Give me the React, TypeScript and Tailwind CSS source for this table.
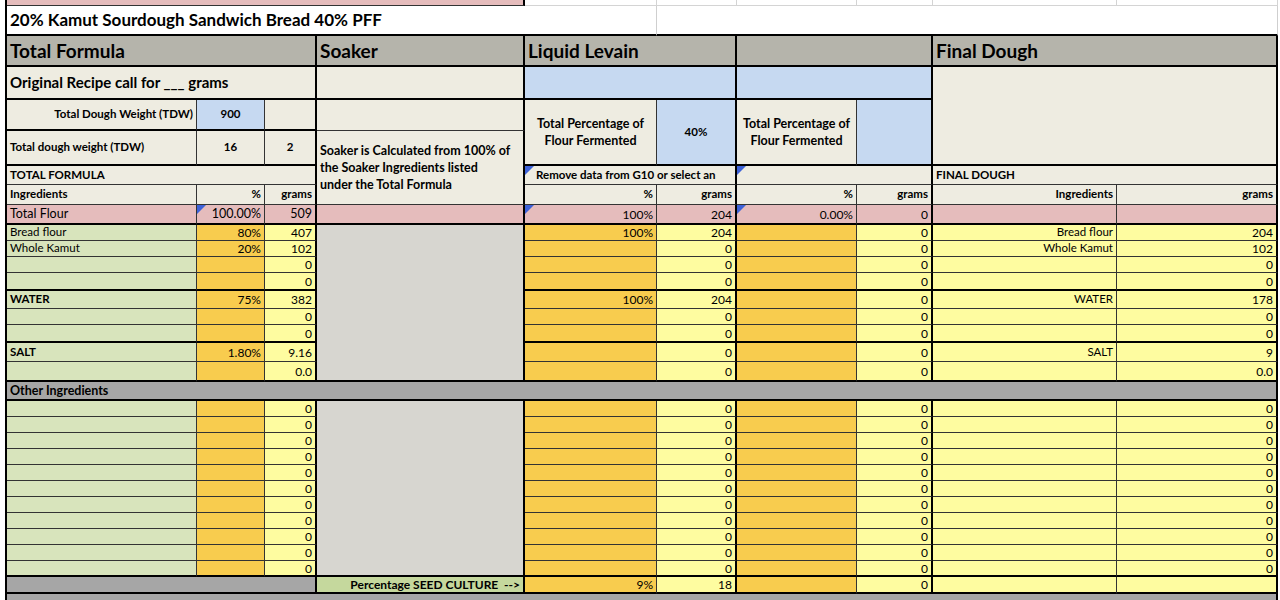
import { ReactNode } from 'react';
import clsx from 'clsx';

// spreadsheet palette
const WHITE = 'bg-white';
const PINK = 'bg-[#e5bcbc]';
const HEAD = 'bg-[#b5b4ab]';
const BEIGE = 'bg-[#eeece1]';
const BLUE = 'bg-[#c6d9f1]';
const GREEN = 'bg-[#d8e4bc]';
const ORANGE = 'bg-[#f8cc4e]';
const YEL = 'bg-[#fefca0]';
const GRAY = 'bg-[#d7d6d0]';
const DARK = 'bg-[#a6a6a6]';
const SEED = 'bg-[#c5d89d]';

const thickCols = [2, 3, 5, 7, 9];

const spanCls: Record<number, string> = {
  1: 'col-span-1',
  2: 'col-span-2',
  3: 'col-span-3',
  4: 'col-span-4',
  5: 'col-span-5',
  10: 'col-span-10',
};

const rowCls: Record<number, string> = {
  1: '',
  2: 'row-span-2',
  3: 'row-span-3',
  9: 'row-span-9',
  11: 'row-span-11',
};

type CellProps = {
  col: number;
  span?: number;
  rows?: number;
  bg: string;
  children?: ReactNode;
  align?: 'left' | 'right' | 'center';
  bold?: boolean;
  tb?: boolean;
  light?: boolean;
  mark?: boolean;
  wrap?: boolean;
  size?: string;
};

function Mark() {
  return (
    <svg className="absolute left-0 top-0" width="9" height="9" viewBox="0 0 9 9">
      <polygon points="0,0 9,0 0,9" fill="#3d62d8" />
    </svg>
  );
}

function C({
  col,
  span = 1,
  rows = 1,
  bg,
  children,
  align = 'left',
  bold,
  tb,
  light,
  mark,
  wrap,
  size = 'text-[12px]',
}: CellProps) {
  const last = col + span - 1;
  const thickR = thickCols.includes(last);
  return (
    <div
      className={clsx(
        'relative flex items-center overflow-hidden px-[3px] text-black',
        wrap ? 'whitespace-normal leading-[17px]' : 'whitespace-nowrap leading-tight',
        spanCls[span],
        rowCls[rows],
        bg,
        size,
        bold && 'font-bold',
        align === 'right' && 'justify-end text-right',
        align === 'center' && 'justify-center text-center',
        light
          ? 'border-r border-b border-[#d4d4d4]'
          : clsx(
              thickR ? 'border-r-2 border-r-black' : 'border-r border-r-[#333]',
              tb ? 'border-b-2 border-b-black' : 'border-b border-b-[#333]'
            )
      )}
    >
      {mark && <Mark />}
      {children}
    </div>
  );
}

type Row = {
  a?: string;
  b?: string;
  c?: string;
  e?: string;
  f?: string;
  h?: string;
  i?: string;
  j?: string;
  strong?: boolean;
};

const z: Row = { c: '0', f: '0', h: '0', j: '0' };

const flour: Row[] = [
  { a: 'Bread flour', b: '80%', c: '407', e: '100%', f: '204', h: '0', i: 'Bread flour', j: '204' },
  { a: 'Whole Kamut', b: '20%', c: '102', f: '0', h: '0', i: 'Whole Kamut', j: '102' },
  z,
  z,
];
const water: Row[] = [
  { a: 'WATER', strong: true, b: '75%', c: '382', e: '100%', f: '204', h: '0', i: 'WATER', j: '178' },
  z,
  z,
];
const salt: Row[] = [
  { a: 'SALT', strong: true, b: '1.80%', c: '9.16', f: '0', h: '0', i: 'SALT', j: '9' },
  { c: '0.0', f: '0', h: '0', j: '0.0' },
];
const other: Row[] = Array.from({ length: 11 }, () => z);

function DataRow({ r, tb, soaker }: { r: Row; tb?: boolean; soaker?: number }) {
  return (
    <>
      <C col={0} bg={GREEN} bold={r.strong} tb={tb} size="text-[11.5px]">
        {r.a}
      </C>
      <C col={1} bg={ORANGE} align="right" tb={tb}>
        {r.b}
      </C>
      <C col={2} bg={YEL} align="right" tb={tb}>
        {r.c}
      </C>
      {soaker && <C col={3} rows={soaker} bg={GRAY} tb />}
      <C col={4} bg={ORANGE} align="right" tb={tb}>
        {r.e}
      </C>
      <C col={5} bg={YEL} align="right" tb={tb}>
        {r.f}
      </C>
      <C col={6} bg={ORANGE} tb={tb} />
      <C col={7} bg={YEL} align="right" tb={tb}>
        {r.h}
      </C>
      <C col={8} bg={YEL} align="right" tb={tb} size="text-[11.5px]">
        {r.i}
      </C>
      <C col={9} bg={YEL} align="right" tb={tb}>
        {r.j}
      </C>
    </>
  );
}

function Section({ rows, soaker }: { rows: Row[]; soaker?: number }) {
  return (
    <>
      {rows.map((r, idx) => (
        <DataRow
          key={idx}
          r={r}
          tb={idx === rows.length - 1}
          soaker={idx === 0 ? soaker : undefined}
        />
      ))}
    </>
  );
}

export default function App() {
  return (
    <div className="min-h-screen overflow-hidden bg-white font-[Lato,sans-serif]">
      <div className="ml-[5px] grid w-max grid-cols-[190px_68px_52px_208px_132px_80px_120px_76px_184px_161px] grid-rows-[6px_30px_31px_33px_31px_35px_19px_20px_20px_16px_16px_16px_18px_18px_16px_18px_19px_20px_19px_repeat(11,16px)_17px_22px] border-l-2 border-black">
        {/* cut-off row on top */}
        <C col={0} span={4} bg={PINK} />
        <C col={4} bg={WHITE} light />
        <C col={5} bg={WHITE} light />
        <C col={6} bg={WHITE} light />
        <C col={7} bg={WHITE} light />
        <C col={8} bg={WHITE} light />
        <C col={9} bg={WHITE} light />

        {/* title */}
        <div className="col-span-5 flex items-center border-r border-b-2 border-r-[#cfcfcf] border-b-black bg-white px-[3px] text-[17px] font-bold text-black">
          20% Kamut Sourdough Sandwich Bread 40% PFF
        </div>
        <div className="col-span-5 border-r border-b-2 border-r-[#cfcfcf] border-b-black bg-white" />

        {/* section headers */}
        <C col={0} span={3} bg={HEAD} bold tb size="text-[19px]">
          Total Formula
        </C>
        <C col={3} bg={HEAD} bold tb size="text-[19px]">
          Soaker
        </C>
        <C col={4} span={2} bg={HEAD} bold tb size="text-[19px]">
          Liquid Levain
        </C>
        <C col={6} span={2} bg={HEAD} tb />
        <C col={8} span={2} bg={HEAD} bold tb size="text-[19px]">
          Final Dough
        </C>

        {/* recipe size */}
        <C col={0} span={3} bg={BEIGE} bold tb size="text-[15px]">
          Original Recipe call for ___ grams
        </C>
        <C col={3} bg={BEIGE} tb />
        <C col={4} span={2} bg={BLUE} tb />
        <C col={6} span={2} bg={BLUE} tb />
        <C col={8} span={2} rows={3} bg={BEIGE} tb />

        <C col={0} bg={BEIGE} bold tb align="right" size="text-[11.5px]">
          Total Dough Weight (TDW)
        </C>
        <C col={1} bg={BLUE} bold tb align="center" size="text-[11.5px]">
          900
        </C>
        <C col={2} bg={BEIGE} tb />
        <C col={3} bg={BEIGE} />
        <C col={4} rows={2} bg={BEIGE} bold tb wrap align="center" size="text-[12.5px]">
          Total Percentage of
          <br />
          Flour Fermented
        </C>
        <C col={5} rows={2} bg={BLUE} bold tb align="center" size="text-[11.5px]">
          40%
        </C>
        <C col={6} rows={2} bg={BEIGE} bold tb wrap align="center" size="text-[12.5px]">
          Total Percentage of
          <br />
          Flour Fermented
        </C>
        <C col={7} rows={2} bg={BLUE} tb />

        <C col={0} bg={BEIGE} bold tb size="text-[11.5px]">
          Total dough weight (TDW)
        </C>
        <C col={1} bg={BEIGE} bold tb align="center" size="text-[11.5px]">
          16
        </C>
        <C col={2} bg={BEIGE} bold tb align="center" size="text-[11.5px]">
          2
        </C>
        <C col={3} rows={3} bg={BEIGE} bold wrap size="text-[12.5px]">
          <span>
            Soaker is Calculated from 100% of
            <br />
            the Soaker Ingredients listed
            <br />
            under the Total Formula
          </span>
        </C>

        <C col={0} span={3} bg={BEIGE} bold size="text-[11.5px]">
          TOTAL FORMULA
        </C>
        <C col={4} span={2} bg={BEIGE} bold mark size="text-[11.5px]">
          <span className="pl-[8px]">Remove data from G10 or select an</span>
        </C>
        <C col={6} span={2} bg={BEIGE} mark />
        <C col={8} span={2} bg={BEIGE} bold size="text-[11.5px]">
          FINAL DOUGH
        </C>

        <C col={0} bg={BEIGE} bold size="text-[11.5px]">
          Ingredients
        </C>
        <C col={1} bg={BEIGE} bold align="right" size="text-[11.5px]">
          %
        </C>
        <C col={2} bg={BEIGE} bold align="right" size="text-[11.5px]">
          grams
        </C>
        <C col={4} bg={BEIGE} bold align="right" size="text-[11.5px]">
          %
        </C>
        <C col={5} bg={BEIGE} bold align="right" size="text-[11.5px]">
          grams
        </C>
        <C col={6} bg={BEIGE} bold align="right" size="text-[11.5px]">
          %
        </C>
        <C col={7} bg={BEIGE} bold align="right" size="text-[11.5px]">
          grams
        </C>
        <C col={8} bg={BEIGE} bold align="right" size="text-[11.5px]">
          Ingredients
        </C>
        <C col={9} bg={BEIGE} bold align="right" size="text-[11.5px]">
          grams
        </C>

        {/* total flour */}
        <C col={0} bg={PINK} tb size="text-[12.5px]">
          Total Flour
        </C>
        <C col={1} bg={PINK} tb mark align="right" size="text-[12.5px]">
          100.00%
        </C>
        <C col={2} bg={PINK} tb align="right" size="text-[12.5px]">
          509
        </C>
        <C col={3} bg={PINK} tb />
        <C col={4} bg={PINK} tb mark align="right">
          100%
        </C>
        <C col={5} bg={PINK} tb align="right">
          204
        </C>
        <C col={6} bg={PINK} tb mark align="right">
          0.00%
        </C>
        <C col={7} bg={PINK} tb align="right">
          0
        </C>
        <C col={8} bg={PINK} tb />
        <C col={9} bg={PINK} tb />

        <Section rows={flour} soaker={9} />
        <Section rows={water} />
        <Section rows={salt} />

        <C col={0} span={10} bg={DARK} bold tb size="text-[12.5px]">
          Other Ingredients
        </C>

        <Section rows={other} soaker={11} />

        {/* seed culture */}
        <C col={0} span={3} bg={DARK} tb />
        <C col={3} bg={SEED} bold tb align="right" size="text-[12px]">
          Percentage SEED CULTURE&nbsp;&nbsp;--&gt;
        </C>
        <C col={4} bg={ORANGE} tb align="right">
          9%
        </C>
        <C col={5} bg={YEL} tb align="right">
          18
        </C>
        <C col={6} bg={ORANGE} tb />
        <C col={7} bg={YEL} tb align="right">
          0
        </C>
        <C col={8} bg={YEL} tb />
        <C col={9} bg={YEL} tb />

        <div className="col-span-10 flex items-start border-r-2 border-black bg-[#a6a6a6] px-[3px] pt-[2px] text-[12px] font-bold text-black">
          Soaker Ingredients
        </div>
      </div>
    </div>
  );
}
